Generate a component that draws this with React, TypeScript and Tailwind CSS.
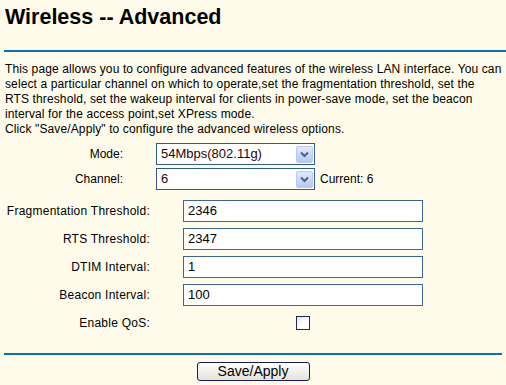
import React from "react";

function Arrow() {
  return (
    <span className="flex items-center justify-center w-[17px] h-[17px] rounded-[2px] border border-[#b9c9ef] bg-gradient-to-b from-[#e1eafe] to-[#b5c8f2]">
      <svg width="9" height="7" viewBox="0 0 9 7">
        <path d="M1 1.5 L4.5 5 L8 1.5" fill="none" stroke="#4d6185" strokeWidth="2" />
      </svg>
    </span>
  );
}

function Select({ value }: { value: string }) {
  return (
    <div className="flex items-center justify-between w-[159px] h-[22px] border border-[#2e5d8e] bg-white pl-[4px] pr-[1px]">
      <span className="text-[13px] text-[#2a0606]">{value}</span>
      <Arrow />
    </div>
  );
}

function Field({ label, value }: { label: string; value: string }) {
  return (
    <div className="flex items-center h-[22px]">
      <span className="w-[150px] text-right tracking-[0.25px]">{label}</span>
      <div className="ml-[33px] w-[240px] h-[22px] border border-[#3a6798] bg-white pl-[4px] flex items-center text-[13px] text-black">
        {value}
      </div>
    </div>
  );
}

export default function App() {
  return (
    <div className="w-[506px] h-[385px] overflow-hidden bg-[#fefbea] text-black text-[12px] font-['Liberation_Sans',Arial,sans-serif]">
      <h1 className="pl-[5px] pt-[4px] text-[21.5px] leading-[26px] font-bold">Wireless -- Advanced</h1>
      <div className="ml-[4px] mt-[20px] h-[2px] bg-[#0a6ebd]" />

      <p className="pl-[5px] mt-[10px] leading-[15px] tracking-[0.12px]">
        This page allows you to configure advanced features of the wireless LAN interface. You can
        <br />
        select a particular channel on which to operate,set the fragmentation threshold, set the
        <br />
        RTS threshold, set the wakeup interval for clients in power-save mode, set the beacon
        <br />
        interval for the access point,set XPress mode.
        <br />
        Click "Save/Apply" to configure the advanced wireless options.
      </p>

      <div className="mt-[6px] flex flex-col gap-[3px]">
        <div className="flex items-center">
          <span className="w-[123px] text-right">Mode:</span>
          <div className="ml-[33px]">
            <Select value="54Mbps(802.11g)" />
          </div>
        </div>
        <div className="flex items-center">
          <span className="w-[123px] text-right">Channel:</span>
          <div className="ml-[33px]">
            <Select value="6" />
          </div>
          <span className="ml-[5px]">Current: 6</span>
        </div>
      </div>

      <div className="mt-[10px] flex flex-col gap-[6px]">
        <Field label="Fragmentation Threshold:" value="2346" />
        <Field label="RTS Threshold:" value="2347" />
        <Field label="DTIM Interval:" value="1" />
        <Field label="Beacon Interval:" value="100" />
        <div className="flex items-center h-[22px]">
          <span className="w-[150px] text-right tracking-[0.25px]">Enable QoS:</span>
          <div className="ml-[33px] w-[240px] flex justify-center">
            <span className="w-[14px] h-[14px] border border-[#1c2a5c] bg-gradient-to-br from-[#e2e2de] via-white to-white" />
          </div>
        </div>
      </div>

      <div className="mx-[4px] mt-[19px] h-[2px] bg-[#0a6ebd]" />

      <div className="mt-[7px] flex justify-center">
        <button className="w-[113px] h-[19px] rounded-[3px] border border-[#1c1c50] bg-gradient-to-b from-white to-[#e4e2da] text-[14px] leading-[17px] text-black">
          Save/Apply
        </button>
      </div>
    </div>
  );
}
